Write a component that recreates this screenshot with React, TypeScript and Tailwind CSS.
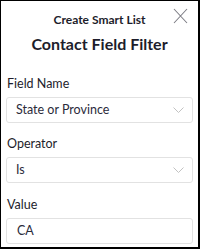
export default function App() {
  const font = { fontFamily: "Lato, 'Noto Sans', sans-serif" };
  return (
    <div
      className="w-[200px] h-[249px] border border-black border-r-2 border-b-2 bg-white text-[#1d1d2b] flex flex-col"
      style={font}
    >
      <div className="relative pt-[12px] flex flex-col items-center">
        <div className="text-[12px] font-bold leading-[14px]">Create Smart List</div>
        <div className="mt-[8px] text-[16px] font-bold leading-[18px]">Contact Field Filter</div>
        <button className="absolute right-[10px] top-[7px] text-[#7d7d85]" aria-label="Close">
          <svg width="15" height="16" viewBox="0 0 15 16" fill="none" stroke="currentColor" strokeWidth="1.1">
            <path d="M1 1L14 15M14 1L1 15" />
          </svg>
        </button>
      </div>

      <div className="flex flex-col px-[5px] pt-[23px]">
        <Field label="Field Name">
          <Select value="State or Province" />
        </Field>
        <Field label="Operator" className="mt-[13px]">
          <Select value="Is" />
        </Field>
        <Field label="Value" className="mt-[14px]">
          <div className="h-[26px] rounded-[3px] border border-[#e2e2e2] flex items-center px-[10px] text-[12.5px] text-[#2b2b3b]">
            CA
          </div>
        </Field>
      </div>
    </div>
  );
}

function Field({ label, children, className = "" }: { label: string; children: React.ReactNode; className?: string }) {
  return (
    <div className={"flex flex-col " + className}>
      <div className="pl-[1px] text-[12.5px] leading-[16px] text-[#1d1d2b]">{label}</div>
      <div className="mt-[5px]">{children}</div>
    </div>
  );
}

function Select({ value }: { value: string }) {
  return (
    <div className="h-[26px] rounded-[3px] border border-[#e2e2e2] flex items-center justify-between pl-[9px] pr-[8px] text-[12.5px] text-[#2b2b3b]">
      <span>{value}</span>
      <svg width="11" height="6" viewBox="0 0 11 6" fill="none" stroke="#c2c2c2" strokeWidth="1">
        <path d="M0.5 0.5L5.5 5.5L10.5 0.5" />
      </svg>
    </div>
  );
}
